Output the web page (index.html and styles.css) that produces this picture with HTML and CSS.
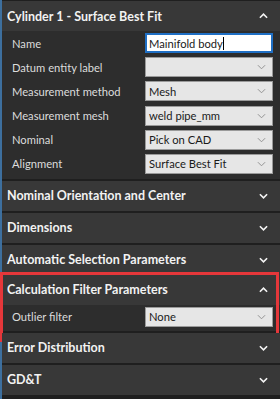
FILE: index.html
```html
<!DOCTYPE html>
<html lang="en">
<head>
    <meta charset="UTF-8">
    <title>Properties</title>
    <link rel="stylesheet" href="styles.css">
</head>
<body>
    <div class="panel">
        <div class="section">
            <div class="head">
                <span>Cylinder 1 - Surface Best Fit</span>
                <svg class="chev" viewBox="0 0 10 6"><path d="M1 5 L5 1 L9 5"/></svg>
            </div>
            <div class="body">
                <div class="row">
                    <span class="label">Name</span>
                    <div class="field text">Mainifold body<span class="caret"></span></div>
                </div>
                <div class="row">
                    <span class="label">Datum entity label</span>
                    <div class="field select"><span></span><svg viewBox="0 0 10 6"><path d="M1 1 L5 5 L9 1"/></svg></div>
                </div>
                <div class="row">
                    <span class="label">Measurement method</span>
                    <div class="field select"><span>Mesh</span><svg viewBox="0 0 10 6"><path d="M1 1 L5 5 L9 1"/></svg></div>
                </div>
                <div class="row">
                    <span class="label">Measurement mesh</span>
                    <div class="field select"><span>weld pipe_mm</span><svg viewBox="0 0 10 6"><path d="M1 1 L5 5 L9 1"/></svg></div>
                </div>
                <div class="row">
                    <span class="label">Nominal</span>
                    <div class="field select"><span>Pick on CAD</span><svg viewBox="0 0 10 6"><path d="M1 1 L5 5 L9 1"/></svg></div>
                </div>
                <div class="row">
                    <span class="label">Alignment</span>
                    <div class="field select"><span>Surface Best Fit</span><svg viewBox="0 0 10 6"><path d="M1 1 L5 5 L9 1"/></svg></div>
                </div>
            </div>
        </div>
        <div class="section">
            <div class="head">
                <span>Nominal Orientation and Center</span>
                <svg class="chev" viewBox="0 0 10 6"><path d="M1 1 L5 5 L9 1"/></svg>
            </div>
        </div>
        <div class="section">
            <div class="head">
                <span>Dimensions</span>
                <svg class="chev" viewBox="0 0 10 6"><path d="M1 1 L5 5 L9 1"/></svg>
            </div>
        </div>
        <div class="section">
            <div class="head">
                <span>Automatic Selection Parameters</span>
                <svg class="chev" viewBox="0 0 10 6"><path d="M1 1 L5 5 L9 1"/></svg>
            </div>
        </div>
        <div class="section marked">
            <div class="head">
                <span>Calculation Filter Parameters</span>
                <svg class="chev" viewBox="0 0 10 6"><path d="M1 5 L5 1 L9 5"/></svg>
            </div>
            <div class="body short">
                <div class="row">
                    <span class="label">Outlier filter</span>
                    <div class="field select"><span>None</span><svg viewBox="0 0 10 6"><path d="M1 1 L5 5 L9 1"/></svg></div>
                </div>
            </div>
        </div>
        <div class="section">
            <div class="head">
                <span>Error Distribution</span>
                <svg class="chev" viewBox="0 0 10 6"><path d="M1 1 L5 5 L9 1"/></svg>
            </div>
        </div>
        <div class="section">
            <div class="head">
                <span>GD&amp;T</span>
                <svg class="chev" viewBox="0 0 10 6"><path d="M1 1 L5 5 L9 1"/></svg>
            </div>
        </div>
    </div>
</body>
</html>
```

FILE: styles.css
```css
*{
    box-sizing: border-box;
    margin: 0;
    padding: 0;
}
body{
    width: 280px;
    height: 399px;
    overflow: hidden;
    background: #1f1f1f;
    font-family: Lato, "Noto Sans", sans-serif;
    font-size: 11px;
    color: #e4e4e4;
}
.panel{
    height: 100%;
    border-left: 2px solid #3d6f9e;
    padding-top: 1px;
    display: flex;
    flex-direction: column;
    gap: 2px;
}
.section{
    position: relative;
    background: #2d2d2d;
}
.head{
    display: flex;
    align-items: center;
    justify-content: space-between;
    height: 30px;
    padding: 0 12px 0 5px;
    background: #383838;
    font-size: 12.5px;
    font-weight: bold;
    color: #f2f2f2;
}
.chev{
    width: 9px;
    height: 6px;
    fill: none;
    stroke: #f4f4f4;
    stroke-width: 1.8;
}
.body{
    padding: 2px 7px 5px 10px;
    display: flex;
    flex-direction: column;
    gap: 4.2px;
}
.body.short{
    padding-bottom: 4px;
}
.row{
    display: flex;
    align-items: center;
    justify-content: space-between;
    height: 20px;
}
.label{
    font-size: 11.2px;
    color: #dcdcdc;
}
.field{
    width: 128px;
    height: 20px;
    display: flex;
    align-items: center;
    justify-content: space-between;
    padding: 0 6px 0 3px;
    color: #1a1a1a;
    font-size: 11.2px;
}
.text{
    background: #fff;
    border: 2px solid #1f6fc4;
    justify-content: flex-start;
    padding-left: 2px;
}
.caret{
    width: 1px;
    height: 13px;
    background: #000;
}
.select{
    background: #e6e6e6;
    border: 1px solid #9a9a9a;
}
.select svg{
    width: 9px;
    height: 6px;
    fill: none;
    stroke: #8a8a8a;
    stroke-width: 1;
}
.marked{
    margin-top: -2px;
}
/* red highlight drawn over the section */
.marked::after{
    content: "";
    position: absolute;
    top: -3px;
    bottom: -11px;
    left: -2px;
    right: 1px;
    border: 3px solid #e5373a;
    pointer-events: none;
}
```
